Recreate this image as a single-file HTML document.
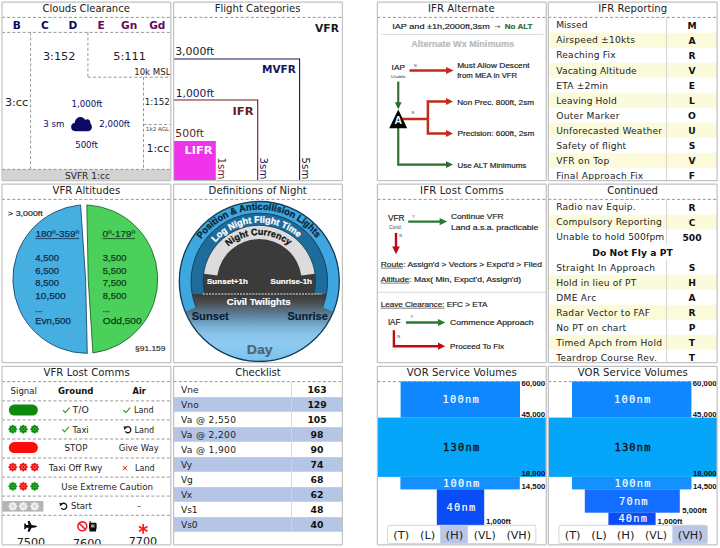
<!DOCTYPE html>
<html lang="en"><head><meta charset="utf-8"><title>Aviation Reference Tiles</title>
<style>
html,body{margin:0;padding:0;background:#fff;}
body{width:720px;height:548px;overflow:hidden;font-family:"DejaVu Sans", "Liberation Sans", sans-serif;}
svg{display:block;}
text{font-family:"DejaVu Sans", "Liberation Sans", sans-serif;}
.title{font-size:10.1px;fill:#222;}
.dash{stroke:#7c7c7c;stroke-width:0.8;stroke-dasharray:3 2.15;fill:none;}
.lb{font-family:"Liberation Sans", "DejaVu Sans", sans-serif;}
.mono{font-family:"DejaVu Sans Mono", "Liberation Mono", monospace;}
.b{font-weight:bold;}
.m{text-anchor:middle;}
.e{text-anchor:end;}
</style></head><body>
<svg width="720" height="548" viewBox="0 0 720 548">
<g fill="#222">
<g>
<rect x="2.0" y="2.1" width="168.8" height="178.5" rx="0.7" fill="#fff" stroke="none"/>
<clipPath id="c1"><rect x="2" y="2.1" width="168.8" height="178.5"/></clipPath>
<g clip-path="url(#c1)">
<text x="16.67" y="28.8" font-size="10.6" class="b m" fill="#0b0b63" >B</text>
<text x="44.800000000000004" y="28.8" font-size="10.6" class="b m" fill="#0b0b63" >C</text>
<text x="72.92999999999999" y="28.8" font-size="10.6" class="b m" fill="#0b0b63" >D</text>
<text x="101.06" y="28.8" font-size="10.6" class="b m" fill="#650a63" >E</text>
<text x="129.19" y="28.8" font-size="10.6" class="b m" fill="#650a63" >Gn</text>
<text x="157.32" y="28.8" font-size="10.6" class="b m" fill="#650a63" >Gd</text>
<line x1="2" y1="32.4" x2="170.8" y2="32.4" class="dash" />
<line x1="30.6" y1="32.4" x2="30.6" y2="169.4" class="dash" />
<line x1="87.9" y1="32.4" x2="87.9" y2="77.2" class="dash" />
<line x1="87.9" y1="77.2" x2="170.8" y2="77.2" class="dash" />
<line x1="143.5" y1="77.2" x2="143.5" y2="169.4" class="dash" />
<line x1="143.5" y1="124.5" x2="170.8" y2="124.5" class="dash" />
<text x="59.2" y="59.7" font-size="11.3" class="m" >3:152</text>
<text x="129.6" y="59.7" font-size="11.3" class="m" >5:111</text>
<text x="134.2" y="74.7" font-size="8.6" class="" >10k MSL</text>
<text x="16.6" y="105.6" font-size="11.3" class="m" >3:cc</text>
<text x="87" y="106.5" font-size="8.6" class="m" fill="#0b0b63" >1,000ft</text>
<text x="53.8" y="127.1" font-size="8.6" class="m" fill="#0b0b63" >3 sm</text>
<text x="114.7" y="127.1" font-size="8.6" class="m" fill="#0b0b63" >2,000ft</text>
<text x="86.5" y="147.5" font-size="8.6" class="m" fill="#0b0b63" >500ft</text>
<text x="157.3" y="104.5" font-size="8.7" class="m" >1:152</text>
<text x="157.5" y="131.2" font-size="5.6" class="m" fill="#444" >1k2 AGL</text>
<text x="157.8" y="151.7" font-size="11" class="m" >1:cc</text>
<path d="M75.5 131.2 C72.5 131.2 71 129.3 71 127 C71 124.6 72.8 123 75 122.8 C75.2 119.3 77.8 116.9 81 116.9 C83.3 116.9 85.2 118 86.2 119.8 C86.9 119.4 87.6 119.2 88.4 119.2 C90.8 119.2 92.3 121.2 92 123.6 C93 124.4 93.6 125.8 93.6 127 C93.6 129.4 91.8 131.2 89.2 131.2 Z" fill="#0b0b63" transform="translate(81.5,0) scale(0.92,1) translate(-82.3,0)"/>
<rect x="2" y="169.4" width="168.8" height="11.3" fill="#d3d3d3" />
<line x1="2" y1="169.4" x2="170.8" y2="169.4" class="dash" />
<text x="87.5" y="178.9" font-size="9" class="m" >SVFR 1:cc</text>
</g>
<line x1="2.0" y1="17.40" x2="170.8" y2="17.40" class="dash"/>
<text x="42.6" y="11.80" class="title" textLength="87.3" lengthAdjust="spacing">Clouds Clearance</text>
<rect x="2.0" y="2.1" width="168.8" height="178.5" rx="0.7" fill="none" stroke="#c2c2c2" stroke-width="1.25"/>
</g>
<g>
<rect x="173.6" y="2.1" width="168.8" height="178.5" rx="0.7" fill="#fff" stroke="none"/>
<clipPath id="c2"><rect x="173.6" y="2.1" width="168.8" height="178.5"/></clipPath>
<g clip-path="url(#c2)">
<text x="338.9" y="31.5" font-size="10.6" class="b e" fill="#1a1a1a" textLength="23.8" lengthAdjust="spacingAndGlyphs">VFR</text>
<text x="175.2" y="55.2" font-size="10.9" class="" fill="#222" >3,000ft</text>
<path d="M173.6 59 H299.6 V181" fill="none" stroke="#16165e" stroke-width="1.1"/>
<text x="295.8" y="73.4" font-size="10.5" class="b e" fill="#16165e" textLength="33.8" lengthAdjust="spacingAndGlyphs">MVFR</text>
<text x="175.8" y="96.5" font-size="10.7" class="" fill="#16165e" >1,000ft</text>
<path d="M173.6 100 H257.7 V181" fill="none" stroke="#6a1c1c" stroke-width="1.1"/>
<text x="253.6" y="114.7" font-size="10.5" class="b e" fill="#6a1c1c" textLength="21" lengthAdjust="spacingAndGlyphs">IFR</text>
<text x="175.3" y="136.9" font-size="10.9" class="" fill="#6a1c1c" >500ft</text>
<rect x="173.6" y="141" width="42.2" height="40" fill="#ee33ea" />
<text x="212.6" y="154.4" font-size="10.5" class="b e" fill="#fff" textLength="28.1" lengthAdjust="spacingAndGlyphs">LIFR</text>
<text x="0" y="0" font-size="10.2" class="" fill="#6a1c1c" transform="translate(217.6,157.6) rotate(90)">1sm</text>
<text x="0" y="0" font-size="10.2" class="" fill="#16165e" transform="translate(259.9,157.6) rotate(90)">3sm</text>
<text x="0" y="0" font-size="10.2" class="" fill="#222" transform="translate(302,157.6) rotate(90)">5sm</text>
</g>
<line x1="173.6" y1="17.40" x2="342.4" y2="17.40" class="dash"/>
<text x="214.7" y="11.80" class="title" textLength="85.8" lengthAdjust="spacing">Flight Categories</text>
<rect x="173.6" y="2.1" width="168.8" height="178.5" rx="0.7" fill="none" stroke="#c2c2c2" stroke-width="1.25"/>
</g>
<g>
<rect x="377.4" y="2.1" width="168.8" height="178.5" rx="0.7" fill="#fff" stroke="none"/>
<text x="392.2" y="29" font-size="7.9" class="lb" fill="#222" textLength="97.6" lengthAdjust="spacingAndGlyphs"  stroke="#222" stroke-width="0.18">IAP and ±1h,2000ft,3sm</text>
<text x="494.2" y="29.3" font-size="7.2" class="" fill="#555" >→</text>
<text x="504.7" y="29" font-size="7.9" class="lb b" fill="#2e6b2c" textLength="27.8" lengthAdjust="spacingAndGlyphs"  stroke="#2e6b2c" stroke-width="0.18">No ALT</text>
<line x1="381" y1="34.4" x2="543.5" y2="34.4" class="" stroke="#d2d2d2" stroke-width="0.8"/>
<text x="411.3" y="46.5" font-size="8.2" class="lb b" fill="#b9b9b9" textLength="102.8" lengthAdjust="spacingAndGlyphs"  stroke="#b9b9b9" stroke-width="0.18">Alternate Wx Minimums</text>
<text x="391.6" y="69.9" font-size="8" class="lb" fill="#222" textLength="13.4" lengthAdjust="spacingAndGlyphs"  stroke="#222" stroke-width="0.18">IAP</text>
<text x="391" y="77.5" font-size="4" class="lb" fill="#333" textLength="14.6" lengthAdjust="spacingAndGlyphs" >Usable</text>
<text x="414" y="66.6" font-size="3.6" class="lb" fill="#333" >N</text>
<text x="411.6" y="114.2" font-size="3.6" class="lb" fill="#333" >N</text>
<path d="M409.5 70.5 H447" stroke="#c22a1c" stroke-width="2.5" fill="none"/>
<path d="M446 66.9 L453.6 70.5 L446 74.1 Z" fill="#c22a1c"/>
<text x="457.2" y="67.5" font-size="7.4" class="lb" fill="#222" textLength="72.5" lengthAdjust="spacingAndGlyphs"  stroke="#222" stroke-width="0.18">Must Allow Descent</text>
<text x="457.2" y="77.5" font-size="7.4" class="lb" fill="#222" textLength="60" lengthAdjust="spacingAndGlyphs"  stroke="#222" stroke-width="0.18">from MEA in VFR</text>
<path d="M398.25 81.6 V103" stroke="#2e6b2c" stroke-width="2.1" fill="none"/>
<path d="M394.8 102.2 L401.7 102.2 L398.25 109.2 Z" fill="#2e6b2c"/>
<path d="M398.25 127 V164.6 H447" stroke="#2e6b2c" stroke-width="2.1" fill="none"/>
<path d="M446 161.2 L453 164.6 L446 168 Z" fill="#2e6b2c"/>
<path d="M402 118.9 H427.9 M446.5 101.6 H427.9 V133.5 H446.5" stroke="#c22a1c" stroke-width="2.5" fill="none"/>
<path d="M446 98.1 L453 101.6 L446 105.1 Z" fill="#c22a1c"/>
<path d="M446 130 L453 133.5 L446 137 Z" fill="#c22a1c"/>
<path d="M398.25 109.6 L407.2 128.3 L389.2 128.3 Z" fill="#000"/>
<text x="398.3" y="123.7" font-size="10.4" class="lb b m" fill="#fff" >A</text>
<text x="457.2" y="104.5" font-size="7.5" class="lb" fill="#222" textLength="76.9" lengthAdjust="spacingAndGlyphs"  stroke="#222" stroke-width="0.18">Non Prec. 800ft, 2sm</text>
<text x="457.4" y="135.6" font-size="7.5" class="lb" fill="#222" textLength="76.9" lengthAdjust="spacingAndGlyphs"  stroke="#222" stroke-width="0.18">Precision: 600ft, 2sm</text>
<text x="457.4" y="167.7" font-size="7.5" class="lb" fill="#222" textLength="69" lengthAdjust="spacingAndGlyphs"  stroke="#222" stroke-width="0.18">Use ALT Minimums</text>
<line x1="377.4" y1="17.40" x2="546.2" y2="17.40" class="dash"/>
<text x="428" y="11.80" class="title" textLength="66.6" lengthAdjust="spacing">IFR Alternate</text>
<rect x="377.4" y="2.1" width="168.8" height="178.5" rx="0.7" fill="none" stroke="#c2c2c2" stroke-width="1.25"/>
</g>
<g>
<rect x="548.3" y="2.1" width="168.8" height="178.5" rx="0.7" fill="#fff" stroke="none"/>
<clipPath id="c4"><rect x="548.3" y="2.1" width="168.8" height="178.5"/></clipPath>
<g clip-path="url(#c4)">
<text x="556.1999999999999" y="28.45" font-size="9.1" class="" fill="#222" textLength="31.25" lengthAdjust="spacing">Missed</text>
<text x="692.0" y="28.90" font-size="9.2" class="b m" fill="#111" >M</text>
<rect x="548.3" y="32.62" width="168.8" height="15.02" fill="#fbfbdc" />
<text x="556.1999999999999" y="43.47" font-size="9.1" class="" fill="#222" textLength="78.75" lengthAdjust="spacing">Airspeed ±10kts</text>
<text x="692.0" y="43.92" font-size="9.2" class="b m" fill="#111" >A</text>
<text x="556.1999999999999" y="58.49" font-size="9.1" class="" fill="#222" textLength="59.50" lengthAdjust="spacing">Reaching Fix</text>
<text x="692.0" y="58.94" font-size="9.2" class="b m" fill="#111" >R</text>
<rect x="548.3" y="62.66" width="168.8" height="15.02" fill="#fbfbdc" />
<text x="556.1999999999999" y="73.51" font-size="9.1" class="" fill="#222" textLength="80.50" lengthAdjust="spacing">Vacating Altitude</text>
<text x="692.0" y="73.96" font-size="9.2" class="b m" fill="#111" >V</text>
<text x="556.1999999999999" y="88.53" font-size="9.1" class="" fill="#222" textLength="51.75" lengthAdjust="spacing">ETA ±2min</text>
<text x="692.0" y="88.98" font-size="9.2" class="b m" fill="#111" >E</text>
<rect x="548.3" y="92.70" width="168.8" height="15.02" fill="#fbfbdc" />
<text x="556.1999999999999" y="103.55" font-size="9.1" class="" fill="#222" textLength="60.50" lengthAdjust="spacing">Leaving Hold</text>
<text x="692.0" y="104.00" font-size="9.2" class="b m" fill="#111" >L</text>
<text x="556.1999999999999" y="118.57" font-size="9.1" class="" fill="#222" textLength="63.25" lengthAdjust="spacing">Outer Marker</text>
<text x="692.0" y="119.02" font-size="9.2" class="b m" fill="#111" >O</text>
<rect x="548.3" y="122.74" width="168.8" height="15.02" fill="#fbfbdc" />
<text x="556.1999999999999" y="133.59" font-size="9.1" class="" fill="#222" textLength="105.75" lengthAdjust="spacing">Unforecasted Weather</text>
<text x="692.0" y="134.04" font-size="9.2" class="b m" fill="#111" >U</text>
<text x="556.1999999999999" y="148.61" font-size="9.1" class="" fill="#222" textLength="70.00" lengthAdjust="spacing">Safety of flight</text>
<text x="692.0" y="149.06" font-size="9.2" class="b m" fill="#111" >S</text>
<rect x="548.3" y="152.78" width="168.8" height="15.02" fill="#fbfbdc" />
<text x="556.1999999999999" y="163.63" font-size="9.1" class="" fill="#222" textLength="53.00" lengthAdjust="spacing">VFR on Top</text>
<text x="692.0" y="164.08" font-size="9.2" class="b m" fill="#111" >V</text>
<text x="556.1999999999999" y="178.65" font-size="9.1" class="" fill="#222" textLength="87.00" lengthAdjust="spacing">Final Approach Fix</text>
<text x="692.0" y="179.10" font-size="9.2" class="b m" fill="#111" >F</text>
<line x1="666.5999999999999" y1="17.60" x2="666.5999999999999" y2="182.82" class="" stroke="#cfcfcf" stroke-width="0.9"/>
</g>
<line x1="548.3" y1="17.40" x2="717.0999999999999" y2="17.40" class="dash"/>
<text x="598.2" y="11.80" class="title" textLength="69" lengthAdjust="spacing">IFR Reporting</text>
<rect x="548.3" y="2.1" width="168.8" height="178.5" rx="0.7" fill="none" stroke="#c2c2c2" stroke-width="1.25"/>
</g>
<g>
<rect x="2.0" y="184.1" width="168.8" height="178.5" rx="0.7" fill="#fff" stroke="none"/>
<path d="M85.6 279 L80.6 204.9 A74.4 74.4 0 0 0 87.3 353.4 Z" fill="#46afe2" stroke="#113a5a" stroke-width="0.8" stroke-linejoin="round"/>
<path d="M88.2 279 L86.8 204.9 A74.4 74.4 0 0 1 92.9 353 Z" fill="#4bd15b" stroke="#0e5a20" stroke-width="0.8" stroke-linejoin="round"/>
<text x="8.1" y="215.7" font-size="8" class="lb" fill="#222" textLength="34.6" lengthAdjust="spacingAndGlyphs"  stroke="#222" stroke-width="0.18">&gt; 3,000ft</text>
<text x="35.4" y="237" font-size="9.2" class="lb" fill="#0d2c4a" textLength="43.7" lengthAdjust="spacingAndGlyphs" stroke="#0d2c4a" stroke-width="0.2">180º-359º</text>
<line x1="35.4" y1="238.6" x2="79.1" y2="238.6" class="" stroke="#0d2c4a" stroke-width="0.8"/>
<text x="102.5" y="237" font-size="9.2" class="lb" fill="#0b3f17" textLength="32.5" lengthAdjust="spacingAndGlyphs" stroke="#0b3f17" stroke-width="0.2">0º-179º</text>
<line x1="102.5" y1="238.6" x2="135" y2="238.6" class="" stroke="#0b3f17" stroke-width="0.8"/>
<text x="35.3" y="261" font-size="9.2" class="lb" fill="#0d2c4a" textLength="23.6" lengthAdjust="spacingAndGlyphs" stroke="#0d2c4a" stroke-width="0.25">4,500</text>
<text x="35.3" y="273.7" font-size="9.2" class="lb" fill="#0d2c4a" textLength="23.6" lengthAdjust="spacingAndGlyphs" stroke="#0d2c4a" stroke-width="0.25">6,500</text>
<text x="35.3" y="286.3" font-size="9.2" class="lb" fill="#0d2c4a" textLength="23.6" lengthAdjust="spacingAndGlyphs" stroke="#0d2c4a" stroke-width="0.25">8,500</text>
<text x="35.3" y="299" font-size="9.2" class="lb" fill="#0d2c4a" textLength="30.5" lengthAdjust="spacingAndGlyphs" stroke="#0d2c4a" stroke-width="0.25">10,500</text>
<text x="35.3" y="311.6" font-size="9.2" class="lb" fill="#0d2c4a" textLength="7" lengthAdjust="spacingAndGlyphs" stroke="#0d2c4a" stroke-width="0.25">...</text>
<text x="35.3" y="324.2" font-size="9.2" class="lb" fill="#0d2c4a" textLength="35.5" lengthAdjust="spacingAndGlyphs" stroke="#0d2c4a" stroke-width="0.25">Evn,500</text>
<text x="102.8" y="261" font-size="9.2" class="lb" fill="#0b3f17" textLength="23.6" lengthAdjust="spacingAndGlyphs" stroke="#0b3f17" stroke-width="0.25">3,500</text>
<text x="102.8" y="273.7" font-size="9.2" class="lb" fill="#0b3f17" textLength="23.6" lengthAdjust="spacingAndGlyphs" stroke="#0b3f17" stroke-width="0.25">5,500</text>
<text x="102.8" y="286.3" font-size="9.2" class="lb" fill="#0b3f17" textLength="23.6" lengthAdjust="spacingAndGlyphs" stroke="#0b3f17" stroke-width="0.25">7,500</text>
<text x="102.8" y="299" font-size="9.2" class="lb" fill="#0b3f17" textLength="23.6" lengthAdjust="spacingAndGlyphs" stroke="#0b3f17" stroke-width="0.25">8,500</text>
<text x="102.8" y="311.6" font-size="9.2" class="lb" fill="#0b3f17" textLength="7" lengthAdjust="spacingAndGlyphs" stroke="#0b3f17" stroke-width="0.25">...</text>
<text x="102.8" y="324.2" font-size="9.2" class="lb" fill="#0b3f17" textLength="38.75" lengthAdjust="spacingAndGlyphs" stroke="#0b3f17" stroke-width="0.25">Odd,500</text>
<text x="135" y="350.7" font-size="7.6" class="lb" fill="#333" textLength="30.5" lengthAdjust="spacingAndGlyphs"  stroke="#333" stroke-width="0.18">§91.159</text>
<line x1="2.0" y1="199.40" x2="170.8" y2="199.40" class="dash"/>
<text x="52.6" y="193.80" class="title" textLength="67.7" lengthAdjust="spacing">VFR Altitudes</text>
<rect x="2.0" y="184.1" width="168.8" height="178.5" rx="0.7" fill="none" stroke="#c2c2c2" stroke-width="1.25"/>
</g>
<g>
<rect x="173.6" y="184.1" width="168.8" height="178.5" rx="0.7" fill="#fff" stroke="none"/>
<defs>
<linearGradient id="dayg" gradientUnits="userSpaceOnUse" x1="0" y1="294" x2="0" y2="363">
<stop offset="0.03" stop-color="#3c3c3c"/><stop offset="0.123" stop-color="#4a4d50"/><stop offset="0.226" stop-color="#566a7c"/>
<stop offset="0.33" stop-color="#5f88a5"/><stop offset="0.45" stop-color="#75aacd"/><stop offset="0.565" stop-color="#88c2e8"/>
<stop offset="0.706" stop-color="#8fcbf1"/><stop offset="1" stop-color="#78c1ec"/>
</linearGradient>
<clipPath id="c6"><rect x="173.6" y="184.1" width="168.8" height="178.5"/></clipPath>
<clipPath id="c6b"><rect x="170" y="190" width="180" height="104"/></clipPath>
</defs>
<g clip-path="url(#c6)">
<circle cx="259.3" cy="281.5" r="80" fill="url(#dayg)"/>
<g clip-path="url(#c6b)">
<circle cx="259.3" cy="281.5" r="68.6" fill="#1e6c9c"/>
<circle cx="259.3" cy="281.5" r="56.2" fill="#3b3b3b" stroke="#17384e" stroke-width="0.7"/>
</g>
<path d="M204.04 273.73 A55.8 55.8 0 0 1 314.56 273.73 L301.29 275.60 A42.4 42.4 0 0 0 217.31 275.60 Z" fill="#dcdcdc" />
<path d="M185.23 311.73 A80 80 0 1 1 333.37 311.73 L322.54 307.31 A68.3 68.3 0 1 0 196.06 307.31 Z" fill="#3fa7e0" />
<path d="M196.06 307.31 A68.3 68.3 0 1 1 322.54 307.31" fill="none" stroke="#143a52" stroke-width="0.9"/>
<circle cx="259.3" cy="281.5" r="80" fill="none" stroke="#123b55" stroke-width="1.3"/>
<line x1="202.8" y1="294" x2="321.8" y2="294" class="" stroke="#ececec" stroke-width="1.1" stroke-dasharray="2 1.1"/>
<path id="a1" d="M201.21 239.30 A71.8 71.8 0 0 1 316.34 237.89" fill="none"/>
<text font-size="9.4" class="lb b" fill="#0c2438" stroke="#0c2438" stroke-width="0.3"><textPath href="#a1" textLength="133.6" lengthAdjust="spacingAndGlyphs">Position &amp; Anticollision Lights</textPath></text>
<path id="a2" d="M215.26 242.54 A58.8 58.8 0 0 1 298.26 237.46" fill="none"/>
<text font-size="9.1" class="lb b" fill="#fff" stroke="#fff" stroke-width="0.3"><textPath href="#a2" textLength="92.4" lengthAdjust="spacingAndGlyphs">Log Night Flight Time</textPath></text>
<path id="a3" d="M228.42 246.60 A46.6 46.6 0 0 1 288.63 245.28" fill="none"/>
<text font-size="9.1" class="lb b" fill="#111" stroke="#111" stroke-width="0.3"><textPath href="#a3" textLength="65.5" lengthAdjust="spacingAndGlyphs">Night Currency</textPath></text>
<text x="207" y="283.5" font-size="7.2" class="lb b" fill="#fff" textLength="40.9" lengthAdjust="spacingAndGlyphs"  stroke="#fff" stroke-width="0.18">Sunset+1h</text>
<text x="270.6" y="283.5" font-size="7.2" class="lb b" fill="#fff" textLength="41.4" lengthAdjust="spacingAndGlyphs"  stroke="#fff" stroke-width="0.18">Sunrise-1h</text>
<text x="226.8" y="304.9" font-size="8.5" class="lb b" fill="#fff" textLength="63.7" lengthAdjust="spacingAndGlyphs"  stroke="#fff" stroke-width="0.18">Civil Twilights</text>
<text x="191.7" y="320.4" font-size="10.4" class="lb b" fill="#0b1d30" textLength="37.1" lengthAdjust="spacingAndGlyphs"  stroke="#0b1d30" stroke-width="0.18">Sunset</text>
<text x="287.5" y="320.3" font-size="10.4" class="lb b" fill="#0b1d30" textLength="40.3" lengthAdjust="spacingAndGlyphs"  stroke="#0b1d30" stroke-width="0.18">Sunrise</text>
<text x="246.8" y="353.6" font-size="13.6" class="lb b" fill="#4c6476" textLength="25.8" lengthAdjust="spacingAndGlyphs"  stroke="#4c6476" stroke-width="0.18">Day</text>
</g>
<line x1="173.6" y1="199.40" x2="342.4" y2="199.40" class="dash"/>
<text x="208.6" y="193.80" class="title" textLength="98.2" lengthAdjust="spacing">Definitions of Night</text>
<rect x="173.6" y="184.1" width="168.8" height="178.5" rx="0.7" fill="none" stroke="#c2c2c2" stroke-width="1.25"/>
</g>
<g>
<rect x="377.4" y="184.1" width="168.8" height="178.5" rx="0.7" fill="#fff" stroke="none"/>
<text x="387.9" y="221.4" font-size="9" class="lb" fill="#222" textLength="16.6" lengthAdjust="spacingAndGlyphs"  stroke="#222" stroke-width="0.18">VFR</text>
<text x="389.1" y="229.1" font-size="4.8" class="lb" fill="#444" textLength="12.9" lengthAdjust="spacingAndGlyphs" >Cond.</text>
<text x="412.2" y="217.6" font-size="3.8" class="lb" fill="#333" >Y</text>
<text x="399.2" y="237.1" font-size="4" class="lb" fill="#333" >N</text>
<path d="M408.2 221.6 H441" stroke="#2a7a32" stroke-width="2.4" fill="none"/>
<path d="M439.6 218 L447.2 221.6 L439.6 225.2 Z" fill="#2a7a32"/>
<path d="M396 232.9 V247.5" stroke="#c00a12" stroke-width="2.4" fill="none"/>
<path d="M392.2 246.4 L399.8 246.4 L396 254.3 Z" fill="#c00a12"/>
<text x="450.9" y="218.9" font-size="7.7" class="lb" fill="#222" textLength="52.7" lengthAdjust="spacingAndGlyphs"  stroke="#222" stroke-width="0.18">Continue VFR</text>
<text x="450.9" y="230" font-size="7.7" class="lb" fill="#222" textLength="87.5" lengthAdjust="spacingAndGlyphs"  stroke="#222" stroke-width="0.18">Land a.s.a. practicable</text>
<text x="380.7" y="266.7" font-size="7.6" class="lb" fill="#222" textLength="161.3" lengthAdjust="spacingAndGlyphs"  stroke="#222" stroke-width="0.18">Route: Assign'd &gt; Vectors &gt; Expct'd &gt; Filed</text>
<line x1="380.7" y1="268.1" x2="402.9" y2="268.1" class="" stroke="#222" stroke-width="0.6"/>
<text x="380.7" y="281.7" font-size="7.6" class="lb" fill="#222" textLength="140.5" lengthAdjust="spacingAndGlyphs"  stroke="#222" stroke-width="0.18">Altitude: Max( Min, Expct'd, Assign'd)</text>
<line x1="380.7" y1="283.1" x2="409.7" y2="283.1" class="" stroke="#222" stroke-width="0.6"/>
<line x1="377.4" y1="292.3" x2="546.2" y2="292.3" class="" stroke="#d2d2d2" stroke-width="0.9"/>
<text x="380.7" y="306.7" font-size="7.6" class="lb" fill="#222" textLength="106.8" lengthAdjust="spacingAndGlyphs"  stroke="#222" stroke-width="0.18">Leave Clearance: EFC &gt; ETA</text>
<line x1="380.7" y1="308.2" x2="444.5" y2="308.2" class="" stroke="#222" stroke-width="0.6"/>
<text x="387.9" y="325.2" font-size="8.7" class="lb" fill="#222" textLength="12.5" lengthAdjust="spacingAndGlyphs"  stroke="#222" stroke-width="0.18">IAF</text>
<text x="410.4" y="318" font-size="3.8" class="lb" fill="#333" >Y</text>
<text x="397.3" y="337.5" font-size="4" class="lb" fill="#333" >N</text>
<path d="M406 322.5 H439" stroke="#2a7a32" stroke-width="2.4" fill="none"/>
<path d="M438 318.9 L445.3 322.5 L438 326.1 Z" fill="#2a7a32"/>
<path d="M393.9 330.2 V346.2 H439" stroke="#c00a12" stroke-width="2.4" fill="none"/>
<path d="M438 342.6 L445.2 346.2 L438 349.8 Z" fill="#c00a12"/>
<text x="450" y="325.2" font-size="7.7" class="lb" fill="#222" textLength="83.7" lengthAdjust="spacingAndGlyphs"  stroke="#222" stroke-width="0.18">Commence Approach</text>
<text x="450" y="348.7" font-size="7.7" class="lb" fill="#222" textLength="54.2" lengthAdjust="spacingAndGlyphs"  stroke="#222" stroke-width="0.18">Proceed To Fix</text>
<line x1="377.4" y1="199.40" x2="546.2" y2="199.40" class="dash"/>
<text x="420" y="193.80" class="title" textLength="83.6" lengthAdjust="spacing">IFR Lost Comms</text>
<rect x="377.4" y="184.1" width="168.8" height="178.5" rx="0.7" fill="none" stroke="#c2c2c2" stroke-width="1.25"/>
</g>
<g>
<rect x="548.3" y="184.1" width="168.8" height="178.5" rx="0.7" fill="#fff" stroke="none"/>
<clipPath id="c8"><rect x="548.3" y="184.1" width="168.8" height="178.5"/></clipPath>
<g clip-path="url(#c8)">
<text x="556.1999999999999" y="210.45" font-size="9.1" class="" fill="#222" textLength="79.50" lengthAdjust="spacing">Radio nav Equip.</text>
<text x="692.0" y="210.90" font-size="9.2" class="b m" fill="#111" >R</text>
<rect x="548.3" y="214.62" width="168.8" height="15.02" fill="#fbfbdc" />
<text x="556.1999999999999" y="225.47" font-size="9.1" class="" fill="#222" textLength="105.50" lengthAdjust="spacing">Compulsory Reporting</text>
<text x="692.0" y="225.92" font-size="9.2" class="b m" fill="#111" >C</text>
<text x="556.1999999999999" y="240.49" font-size="9.1" class="" fill="#222" textLength="108.00" lengthAdjust="spacing">Unable to hold 500fpm</text>
<text x="692.0" y="240.94" font-size="9.2" class="b m" fill="#111" >500</text>
<text x="632.4999999999999" y="255.51" font-size="9.2" class="b m" fill="#111" textLength="80.5" lengthAdjust="spacing">Do Not Fly a PT</text>
<text x="556.1999999999999" y="270.53" font-size="9.1" class="" fill="#222" textLength="98.75" lengthAdjust="spacing">Straight In Approach</text>
<text x="692.0" y="270.98" font-size="9.2" class="b m" fill="#111" >S</text>
<rect x="548.3" y="274.70" width="168.8" height="15.02" fill="#fbfbdc" />
<text x="556.1999999999999" y="285.55" font-size="9.1" class="" fill="#222" textLength="80.00" lengthAdjust="spacing">Hold in lieu of PT</text>
<text x="692.0" y="286.00" font-size="9.2" class="b m" fill="#111" >H</text>
<text x="556.1999999999999" y="300.57" font-size="9.1" class="" fill="#222" textLength="40.00" lengthAdjust="spacing">DME Arc</text>
<text x="692.0" y="301.02" font-size="9.2" class="b m" fill="#111" >A</text>
<rect x="548.3" y="304.74" width="168.8" height="15.02" fill="#fbfbdc" />
<text x="556.1999999999999" y="315.59" font-size="9.1" class="" fill="#222" textLength="93.75" lengthAdjust="spacing">Radar Vector to FAF</text>
<text x="692.0" y="316.04" font-size="9.2" class="b m" fill="#111" >R</text>
<text x="556.1999999999999" y="330.61" font-size="9.1" class="" fill="#222" textLength="70.00" lengthAdjust="spacing">No PT on chart</text>
<text x="692.0" y="331.06" font-size="9.2" class="b m" fill="#111" >P</text>
<rect x="548.3" y="334.78" width="168.8" height="15.02" fill="#fbfbdc" />
<text x="556.1999999999999" y="345.63" font-size="9.1" class="" fill="#222" textLength="105.75" lengthAdjust="spacing">Timed Apch from Hold</text>
<text x="692.0" y="346.08" font-size="9.2" class="b m" fill="#111" >T</text>
<text x="556.1999999999999" y="360.65" font-size="9.1" class="" fill="#222" textLength="100.75" lengthAdjust="spacing">Teardrop Course Rev.</text>
<text x="692.0" y="361.10" font-size="9.2" class="b m" fill="#111" >T</text>
<line x1="666.5999999999999" y1="199.60" x2="666.5999999999999" y2="244.66" class="" stroke="#cfcfcf" stroke-width="0.9"/>
<line x1="666.5999999999999" y1="259.68" x2="666.5999999999999" y2="364.82" class="" stroke="#cfcfcf" stroke-width="0.9"/>
</g>
<line x1="548.3" y1="199.40" x2="717.0999999999999" y2="199.40" class="dash"/>
<text x="607.3" y="193.80" class="title" textLength="50.6" lengthAdjust="spacing">Continued</text>
<rect x="548.3" y="184.1" width="168.8" height="178.5" rx="0.7" fill="none" stroke="#c2c2c2" stroke-width="1.25"/>
</g>
<g>
<rect x="2.0" y="366.3" width="168.8" height="178.5" rx="0.7" fill="#fff" stroke="none"/>
<clipPath id="c9"><rect x="2" y="366.3" width="168.8" height="178.5"/></clipPath>
<g clip-path="url(#c9)">
<line x1="2" y1="400.9" x2="170.8" y2="400.9" class="dash" />
<line x1="2" y1="419.9" x2="170.8" y2="419.9" class="dash" />
<line x1="2" y1="439.0" x2="170.8" y2="439.0" class="dash" />
<line x1="2" y1="458.0" x2="170.8" y2="458.0" class="dash" />
<line x1="2" y1="477.1" x2="170.8" y2="477.1" class="dash" />
<line x1="2" y1="496.1" x2="170.8" y2="496.1" class="dash" />
<line x1="2" y1="515.3" x2="170.8" y2="515.3" class="dash" />
<text x="10.6" y="393.6" font-size="9.2" class="" fill="#222" textLength="26.3" lengthAdjust="spacingAndGlyphs">Signal</text>
<text x="58.1" y="393.6" font-size="9.2" class="b" fill="#111" textLength="35.3" lengthAdjust="spacingAndGlyphs">Ground</text>
<text x="132.5" y="393.6" font-size="9.2" class="b" fill="#111" textLength="13.4" lengthAdjust="spacingAndGlyphs">Air</text>
<rect x="8.8" y="404.6" width="29.1" height="11" rx="5.5" fill="#0b8a0b"/>
<path d="M63.3 410.5 L65.3 412.6 L69.3 407.9" fill="none" stroke="#2a9a2a" stroke-width="1.1" stroke-linecap="round" stroke-linejoin="round"/>
<text x="72.6" y="413.4" font-size="9.2" class="" fill="#222" textLength="16.1" lengthAdjust="spacingAndGlyphs">T/O</text>
<path d="M123.89999999999999 410.5 L125.89999999999999 412.6 L129.9 407.9" fill="none" stroke="#2a9a2a" stroke-width="1.1" stroke-linecap="round" stroke-linejoin="round"/>
<text x="134" y="413.4" font-size="9.2" class="" fill="#222" textLength="19.7" lengthAdjust="spacingAndGlyphs">Land</text>
<path d="M16.91 428.66 L16.91 429.74 L15.99 430.05 L15.66 430.85 L16.09 431.73 L15.33 432.49 L14.46 432.05 L13.65 432.39 L13.34 433.31 L12.26 433.31 L11.95 432.39 L11.15 432.06 L10.27 432.49 L9.51 431.73 L9.95 430.86 L9.61 430.05 L8.69 429.74 L8.69 428.66 L9.61 428.35 L9.94 427.55 L9.51 426.67 L10.27 425.91 L11.14 426.35 L11.95 426.01 L12.26 425.09 L13.34 425.09 L13.65 426.01 L14.45 426.34 L15.33 425.91 L16.09 426.67 L15.65 427.54 L15.99 428.35 Z" fill="#0c8c0c" stroke="#0c8c0c" stroke-width="0.5" stroke-linejoin="round"/>
<circle cx="12.8" cy="429.2" r="1.45" fill="#0a7a0a" stroke="#4fcf4f" stroke-width="0.7"/>
<path d="M27.41 428.66 L27.41 429.74 L26.49 430.05 L26.16 430.85 L26.59 431.73 L25.83 432.49 L24.96 432.05 L24.15 432.39 L23.84 433.31 L22.76 433.31 L22.45 432.39 L21.65 432.06 L20.77 432.49 L20.01 431.73 L20.45 430.86 L20.11 430.05 L19.19 429.74 L19.19 428.66 L20.11 428.35 L20.44 427.55 L20.01 426.67 L20.77 425.91 L21.64 426.35 L22.45 426.01 L22.76 425.09 L23.84 425.09 L24.15 426.01 L24.95 426.34 L25.83 425.91 L26.59 426.67 L26.15 427.54 L26.49 428.35 Z" fill="#0c8c0c" stroke="#0c8c0c" stroke-width="0.5" stroke-linejoin="round"/>
<circle cx="23.3" cy="429.2" r="1.45" fill="#0a7a0a" stroke="#4fcf4f" stroke-width="0.7"/>
<path d="M38.81 428.66 L38.81 429.74 L37.89 430.05 L37.56 430.85 L37.99 431.73 L37.23 432.49 L36.36 432.05 L35.55 432.39 L35.24 433.31 L34.16 433.31 L33.85 432.39 L33.05 432.06 L32.17 432.49 L31.41 431.73 L31.85 430.86 L31.51 430.05 L30.59 429.74 L30.59 428.66 L31.51 428.35 L31.84 427.55 L31.41 426.67 L32.17 425.91 L33.04 426.35 L33.85 426.01 L34.16 425.09 L35.24 425.09 L35.55 426.01 L36.35 426.34 L37.23 425.91 L37.99 426.67 L37.55 427.54 L37.89 428.35 Z" fill="#0c8c0c" stroke="#0c8c0c" stroke-width="0.5" stroke-linejoin="round"/>
<circle cx="34.7" cy="429.2" r="1.45" fill="#0a7a0a" stroke="#4fcf4f" stroke-width="0.7"/>
<path d="M62.599999999999994 429.7 L64.6 431.8 L68.6 427.09999999999997" fill="none" stroke="#2a9a2a" stroke-width="1.1" stroke-linecap="round" stroke-linejoin="round"/>
<text x="72.5" y="432.6" font-size="9.2" class="" fill="#222" textLength="16.2" lengthAdjust="spacingAndGlyphs">Taxi</text>
<path d="M125.30 427.95 A3.05 3.05 0 1 1 125.30 431.45" fill="none" stroke="#1a1a1a" stroke-width="1.3"/>
<path d="M123.5 426.2 L127.30000000000001 426.9 L124.30000000000001 429.9 Z" fill="#1a1a1a"/>
<text x="134.5" y="432.6" font-size="9.2" class="" fill="#222" textLength="19.7" lengthAdjust="spacingAndGlyphs">Land</text>
<rect x="8.8" y="442.1" width="29.1" height="11" rx="5.5" fill="#ff0a0a"/>
<text x="64.5" y="451.1" font-size="9.2" class="" fill="#222" textLength="23" lengthAdjust="spacingAndGlyphs">STOP</text>
<text x="118.8" y="451.1" font-size="9.2" class="" fill="#222" textLength="40" lengthAdjust="spacingAndGlyphs">Give Way</text>
<path d="M16.91 466.56 L16.91 467.64 L15.99 467.95 L15.66 468.75 L16.09 469.63 L15.33 470.39 L14.46 469.95 L13.65 470.29 L13.34 471.21 L12.26 471.21 L11.95 470.29 L11.15 469.96 L10.27 470.39 L9.51 469.63 L9.95 468.76 L9.61 467.95 L8.69 467.64 L8.69 466.56 L9.61 466.25 L9.94 465.45 L9.51 464.57 L10.27 463.81 L11.14 464.25 L11.95 463.91 L12.26 462.99 L13.34 462.99 L13.65 463.91 L14.45 464.24 L15.33 463.81 L16.09 464.57 L15.65 465.44 L15.99 466.25 Z" fill="#ee1414" stroke="#ee1414" stroke-width="0.5" stroke-linejoin="round"/>
<circle cx="12.8" cy="467.1" r="1.45" fill="#d60a0a" stroke="#ff8a8a" stroke-width="0.7"/>
<path d="M27.41 466.56 L27.41 467.64 L26.49 467.95 L26.16 468.75 L26.59 469.63 L25.83 470.39 L24.96 469.95 L24.15 470.29 L23.84 471.21 L22.76 471.21 L22.45 470.29 L21.65 469.96 L20.77 470.39 L20.01 469.63 L20.45 468.76 L20.11 467.95 L19.19 467.64 L19.19 466.56 L20.11 466.25 L20.44 465.45 L20.01 464.57 L20.77 463.81 L21.64 464.25 L22.45 463.91 L22.76 462.99 L23.84 462.99 L24.15 463.91 L24.95 464.24 L25.83 463.81 L26.59 464.57 L26.15 465.44 L26.49 466.25 Z" fill="#ee1414" stroke="#ee1414" stroke-width="0.5" stroke-linejoin="round"/>
<circle cx="23.3" cy="467.1" r="1.45" fill="#d60a0a" stroke="#ff8a8a" stroke-width="0.7"/>
<path d="M38.81 466.56 L38.81 467.64 L37.89 467.95 L37.56 468.75 L37.99 469.63 L37.23 470.39 L36.36 469.95 L35.55 470.29 L35.24 471.21 L34.16 471.21 L33.85 470.29 L33.05 469.96 L32.17 470.39 L31.41 469.63 L31.85 468.76 L31.51 467.95 L30.59 467.64 L30.59 466.56 L31.51 466.25 L31.84 465.45 L31.41 464.57 L32.17 463.81 L33.04 464.25 L33.85 463.91 L34.16 462.99 L35.24 462.99 L35.55 463.91 L36.35 464.24 L37.23 463.81 L37.99 464.57 L37.55 465.44 L37.89 466.25 Z" fill="#ee1414" stroke="#ee1414" stroke-width="0.5" stroke-linejoin="round"/>
<circle cx="34.7" cy="467.1" r="1.45" fill="#d60a0a" stroke="#ff8a8a" stroke-width="0.7"/>
<text x="48.8" y="470.6" font-size="9.2" class="" fill="#222" textLength="53.7" lengthAdjust="spacingAndGlyphs">Taxi Off Rwy</text>
<path d="M122.8 466 L127 470.4 M127 466 L122.8 470.4" stroke="#d01818" stroke-width="0.95" fill="none"/>
<text x="135" y="470.6" font-size="9.2" class="" fill="#222" textLength="19.6" lengthAdjust="spacingAndGlyphs">Land</text>
<path d="M16.91 485.76 L16.91 486.84 L15.99 487.15 L15.66 487.95 L16.09 488.83 L15.33 489.59 L14.46 489.15 L13.65 489.49 L13.34 490.41 L12.26 490.41 L11.95 489.49 L11.15 489.16 L10.27 489.59 L9.51 488.83 L9.95 487.96 L9.61 487.15 L8.69 486.84 L8.69 485.76 L9.61 485.45 L9.94 484.65 L9.51 483.77 L10.27 483.01 L11.14 483.45 L11.95 483.11 L12.26 482.19 L13.34 482.19 L13.65 483.11 L14.45 483.44 L15.33 483.01 L16.09 483.77 L15.65 484.64 L15.99 485.45 Z" fill="#0c8c0c" stroke="#0c8c0c" stroke-width="0.5" stroke-linejoin="round"/>
<circle cx="12.8" cy="486.3" r="1.45" fill="#0a7a0a" stroke="#4fcf4f" stroke-width="0.7"/>
<path d="M27.41 485.76 L27.41 486.84 L26.49 487.15 L26.16 487.95 L26.59 488.83 L25.83 489.59 L24.96 489.15 L24.15 489.49 L23.84 490.41 L22.76 490.41 L22.45 489.49 L21.65 489.16 L20.77 489.59 L20.01 488.83 L20.45 487.96 L20.11 487.15 L19.19 486.84 L19.19 485.76 L20.11 485.45 L20.44 484.65 L20.01 483.77 L20.77 483.01 L21.64 483.45 L22.45 483.11 L22.76 482.19 L23.84 482.19 L24.15 483.11 L24.95 483.44 L25.83 483.01 L26.59 483.77 L26.15 484.64 L26.49 485.45 Z" fill="#ee1414" stroke="#ee1414" stroke-width="0.5" stroke-linejoin="round"/>
<circle cx="23.3" cy="486.3" r="1.45" fill="#d60a0a" stroke="#ff8a8a" stroke-width="0.7"/>
<path d="M38.81 485.76 L38.81 486.84 L37.89 487.15 L37.56 487.95 L37.99 488.83 L37.23 489.59 L36.36 489.15 L35.55 489.49 L35.24 490.41 L34.16 490.41 L33.85 489.49 L33.05 489.16 L32.17 489.59 L31.41 488.83 L31.85 487.96 L31.51 487.15 L30.59 486.84 L30.59 485.76 L31.51 485.45 L31.84 484.65 L31.41 483.77 L32.17 483.01 L33.04 483.45 L33.85 483.11 L34.16 482.19 L35.24 482.19 L35.55 483.11 L36.35 483.44 L37.23 483.01 L37.99 483.77 L37.55 484.64 L37.89 485.45 Z" fill="#0c8c0c" stroke="#0c8c0c" stroke-width="0.5" stroke-linejoin="round"/>
<circle cx="34.7" cy="486.3" r="1.45" fill="#0a7a0a" stroke="#4fcf4f" stroke-width="0.7"/>
<text x="61.3" y="489.6" font-size="9.2" class="" fill="#222" textLength="91.7" lengthAdjust="spacingAndGlyphs">Use Extreme Caution</text>
<rect x="2" y="501" width="41.4" height="10.6" fill="#b4b4b4" />
<path d="M16.91 505.76 L16.91 506.84 L15.99 507.15 L15.66 507.95 L16.09 508.83 L15.33 509.59 L14.46 509.15 L13.65 509.49 L13.34 510.41 L12.26 510.41 L11.95 509.49 L11.15 509.16 L10.27 509.59 L9.51 508.83 L9.95 507.96 L9.61 507.15 L8.69 506.84 L8.69 505.76 L9.61 505.45 L9.94 504.65 L9.51 503.77 L10.27 503.01 L11.14 503.45 L11.95 503.11 L12.26 502.19 L13.34 502.19 L13.65 503.11 L14.45 503.44 L15.33 503.01 L16.09 503.77 L15.65 504.64 L15.99 505.45 Z" fill="#f4f4f4" stroke="#f4f4f4" stroke-width="0.5" stroke-linejoin="round"/>
<circle cx="12.8" cy="506.3" r="1.45" fill="#e6e6e6" stroke="#c4c4c4" stroke-width="0.7"/>
<path d="M27.41 505.76 L27.41 506.84 L26.49 507.15 L26.16 507.95 L26.59 508.83 L25.83 509.59 L24.96 509.15 L24.15 509.49 L23.84 510.41 L22.76 510.41 L22.45 509.49 L21.65 509.16 L20.77 509.59 L20.01 508.83 L20.45 507.96 L20.11 507.15 L19.19 506.84 L19.19 505.76 L20.11 505.45 L20.44 504.65 L20.01 503.77 L20.77 503.01 L21.64 503.45 L22.45 503.11 L22.76 502.19 L23.84 502.19 L24.15 503.11 L24.95 503.44 L25.83 503.01 L26.59 503.77 L26.15 504.64 L26.49 505.45 Z" fill="#f4f4f4" stroke="#f4f4f4" stroke-width="0.5" stroke-linejoin="round"/>
<circle cx="23.3" cy="506.3" r="1.45" fill="#e6e6e6" stroke="#c4c4c4" stroke-width="0.7"/>
<path d="M38.81 505.76 L38.81 506.84 L37.89 507.15 L37.56 507.95 L37.99 508.83 L37.23 509.59 L36.36 509.15 L35.55 509.49 L35.24 510.41 L34.16 510.41 L33.85 509.49 L33.05 509.16 L32.17 509.59 L31.41 508.83 L31.85 507.96 L31.51 507.15 L30.59 506.84 L30.59 505.76 L31.51 505.45 L31.84 504.65 L31.41 503.77 L32.17 503.01 L33.04 503.45 L33.85 503.11 L34.16 502.19 L35.24 502.19 L35.55 503.11 L36.35 503.44 L37.23 503.01 L37.99 503.77 L37.55 504.64 L37.89 505.45 Z" fill="#f4f4f4" stroke="#f4f4f4" stroke-width="0.5" stroke-linejoin="round"/>
<circle cx="34.7" cy="506.3" r="1.45" fill="#e6e6e6" stroke="#c4c4c4" stroke-width="0.7"/>
<path d="M61.20 504.55 A3.05 3.05 0 1 1 61.20 508.05" fill="none" stroke="#1a1a1a" stroke-width="1.3"/>
<path d="M59.4 502.8 L63.199999999999996 503.5 L60.199999999999996 506.5 Z" fill="#1a1a1a"/>
<text x="71" y="509.4" font-size="9.2" class="" fill="#222" textLength="20.8" lengthAdjust="spacingAndGlyphs">Start</text>
<text x="137.4" y="509.2" font-size="9.2" class="" fill="#222" textLength="3.4" lengthAdjust="spacingAndGlyphs">-</text>
<path d="M37.4 526.4 C36 525.6 33.8 525.2 31.6 525 L29.6 521 L27.6 521 L28.6 525 L26.4 525 L25.2 523.5 L24 523.5 L24.5 525.4 L24 526.4 L24.5 527.4 L24 529.3 L25.2 529.3 L26.4 527.8 L28.6 527.8 L27.6 531.8 L29.6 531.8 L31.6 527.8 C33.8 527.6 36 527.2 37.4 526.4 Z" fill="#0a0a0a"/>
<text x="31" y="546.4" font-size="11.2" class="m" fill="#222" >7500</text>
<circle cx="82.3" cy="526.3" r="4.45" fill="#fff" stroke="#ee1c24" stroke-width="1.6"/>
<path d="M79.1 523.1 L85.5 529.5" stroke="#ee1c24" stroke-width="1.6"/>
<path d="M89.7 521 h1 v1.7 h4.6 q1.3 0 1.3 1.3 v3.9 q0 0.9 -0.5 1.5 v2 h-6.6 v-2 q-0.5 -0.6 -0.5 -1.5 v-3.9 q0 -1.1 0.7 -1.3 Z" fill="#0a0a0a"/>
<path d="M90.9 525.1 h3.7 M90.9 526.8 h3.7" stroke="#fff" stroke-width="0.9"/>
<text x="87.2" y="547.2" font-size="11.2" class="m" fill="#222" >7600</text>
<path d="M143.2 523.9 V533.7 M138.9 526.4 L147.5 531.2 M147.5 526.4 L138.9 531.2" stroke="#ff1c1c" stroke-width="1.7" fill="none"/>
<text x="143" y="545.2" font-size="11.2" class="m" fill="#222" >7700</text>
</g>
<line x1="2.0" y1="381.60" x2="170.8" y2="381.60" class="dash"/>
<text x="43.5" y="376.00" class="title" textLength="86.2" lengthAdjust="spacing">VFR Lost Comms</text>
<rect x="2.0" y="366.3" width="168.8" height="178.5" rx="0.7" fill="none" stroke="#c2c2c2" stroke-width="1.25"/>
</g>
<g>
<rect x="173.6" y="366.3" width="168.8" height="178.5" rx="0.7" fill="#fff" stroke="none"/>
<clipPath id="c10"><rect x="173.6" y="366.3" width="168.8" height="178.5"/></clipPath>
<g clip-path="url(#c10)">
<text x="181" y="392.80" font-size="9.1" class="" fill="#222" textLength="17.6" lengthAdjust="spacing">Vne</text>
<text x="317.1" y="392.95" font-size="9.3" class="b m" fill="#111" >163</text>
<rect x="173.6" y="397.15" width="168.8" height="14.6" fill="#b5c5e6" />
<text x="181" y="407.80" font-size="9.1" class="" fill="#222" textLength="17.8" lengthAdjust="spacing">Vno</text>
<text x="317.1" y="407.95" font-size="9.3" class="b m" fill="#111" >129</text>
<text x="181" y="422.80" font-size="9.1" class="" fill="#222" textLength="55" lengthAdjust="spacing">Va @ 2,550</text>
<text x="317.1" y="422.95" font-size="9.3" class="b m" fill="#111" >105</text>
<rect x="173.6" y="427.15" width="168.8" height="14.6" fill="#b5c5e6" />
<text x="181" y="437.80" font-size="9.1" class="" fill="#222" textLength="55" lengthAdjust="spacing">Va @ 2,200</text>
<text x="317.1" y="437.95" font-size="9.3" class="b m" fill="#111" >98</text>
<text x="181" y="452.80" font-size="9.1" class="" fill="#222" textLength="55" lengthAdjust="spacing">Va @ 1,900</text>
<text x="317.1" y="452.95" font-size="9.3" class="b m" fill="#111" >90</text>
<rect x="173.6" y="457.15" width="168.8" height="14.6" fill="#b5c5e6" />
<text x="181" y="467.80" font-size="9.1" class="" fill="#222" textLength="11.2" lengthAdjust="spacing">Vy</text>
<text x="317.1" y="467.95" font-size="9.3" class="b m" fill="#111" >74</text>
<text x="181" y="482.80" font-size="9.1" class="" fill="#222" textLength="11.8" lengthAdjust="spacing">Vg</text>
<text x="317.1" y="482.95" font-size="9.3" class="b m" fill="#111" >68</text>
<rect x="173.6" y="487.15" width="168.8" height="14.6" fill="#b5c5e6" />
<text x="181" y="497.80" font-size="9.1" class="" fill="#222" textLength="11.2" lengthAdjust="spacing">Vx</text>
<text x="317.1" y="497.95" font-size="9.3" class="b m" fill="#111" >62</text>
<text x="181" y="512.80" font-size="9.1" class="" fill="#222" textLength="16.6" lengthAdjust="spacing">Vs1</text>
<text x="317.1" y="512.95" font-size="9.3" class="b m" fill="#111" >48</text>
<rect x="173.6" y="517.15" width="168.8" height="14.6" fill="#b5c5e6" />
<text x="181" y="527.80" font-size="9.1" class="" fill="#222" textLength="16.6" lengthAdjust="spacing">Vs0</text>
<text x="317.1" y="527.95" font-size="9.3" class="b m" fill="#111" >40</text>
<line x1="291.5" y1="381.6" x2="291.5" y2="532" class="" stroke="#d4d6de" stroke-width="0.9"/>
</g>
<line x1="173.6" y1="381.60" x2="342.4" y2="381.60" class="dash"/>
<text x="235.3" y="376.00" class="title" textLength="45.3" lengthAdjust="spacing">Checklist</text>
<rect x="173.6" y="366.3" width="168.8" height="178.5" rx="0.7" fill="none" stroke="#c2c2c2" stroke-width="1.25"/>
</g>
<g>
<rect x="377.4" y="366.3" width="168.8" height="178.5" rx="0.7" fill="#fff" stroke="none"/>
<clipPath id="c11"><rect x="377.4" y="366.3" width="168.8" height="178.5"/></clipPath>
<g clip-path="url(#c11)">
<rect x="400.60" y="381.5" width="119.40" height="36.20" fill="#0f88ff" />
<text x="442.60" y="403.4" font-size="10.4" class="mono" fill="#fff" textLength="36.2" lengthAdjust="spacing" stroke="#fff" stroke-width="0.15">100nm</text>
<rect x="377.4" y="417.6" width="168.8" height="59.30" fill="#05a6f9" />
<text x="443.00" y="450.8" font-size="10.4" class="mono" fill="#111" textLength="36.2" lengthAdjust="spacing" stroke="#111" stroke-width="0.35">130nm</text>
<rect x="400.40" y="476.9" width="119.40" height="12.50" fill="#1590ff" />
<text x="443.00" y="487" font-size="10.4" class="mono" fill="#fff" textLength="36.2" lengthAdjust="spacing" stroke="#fff" stroke-width="0.15">100nm</text>
<rect x="436.80" y="489.3" width="47.40" height="36.00" fill="#0a4cf6" />
<text x="446.60" y="510.6" font-size="10.4" class="mono" fill="#fff" textLength="28.6" lengthAdjust="spacing" stroke="#fff" stroke-width="0.15">40nm</text>
<text x="521.40" y="386.3" font-size="6.9" class="lb b" fill="#111" textLength="23.8" lengthAdjust="spacingAndGlyphs">60,000</text>
<text x="521.40" y="417.2" font-size="6.9" class="lb b" fill="#111" textLength="23.8" lengthAdjust="spacingAndGlyphs">45,000</text>
<text x="521.50" y="475.5" font-size="6.9" class="lb b" fill="#111" textLength="23.8" lengthAdjust="spacingAndGlyphs">18,000</text>
<text x="521.50" y="488.7" font-size="6.9" class="lb b" fill="#111" textLength="23.8" lengthAdjust="spacingAndGlyphs">14,500</text>
<text x="486.00" y="523.8" font-size="6.9" class="lb b" fill="#111" textLength="24.8" lengthAdjust="spacingAndGlyphs">1,000ft</text>
<rect x="387.50" y="525.3" width="148.4" height="18.3" rx="2" fill="#fff"/>
<rect x="440.20" y="525.3" width="27.60" height="18.3" fill="#b9c6e6" />
<text x="401.25" y="538.6" font-size="10.6" class="m" fill="#222" textLength="15.8" lengthAdjust="spacingAndGlyphs">(T)</text>
<text x="427.60" y="538.6" font-size="10.6" class="m" fill="#222" textLength="15.4" lengthAdjust="spacingAndGlyphs">(L)</text>
<text x="454.30" y="538.6" font-size="10.6" class="m" fill="#222" textLength="17.8" lengthAdjust="spacingAndGlyphs">(H)</text>
<text x="484.70" y="538.6" font-size="10.6" class="m" fill="#222" textLength="22" lengthAdjust="spacingAndGlyphs">(VL)</text>
<text x="518.75" y="538.6" font-size="10.6" class="m" fill="#222" textLength="24.7" lengthAdjust="spacingAndGlyphs">(VH)</text>
<rect x="387.50" y="525.3" width="148.4" height="18.3" rx="2" fill="none" stroke="#cfcfcf" stroke-width="0.9"/>
</g>
<line x1="377.4" y1="381.60" x2="546.2" y2="381.60" class="dash"/>
<text x="406.8" y="376.00" class="title" textLength="110" lengthAdjust="spacing">VOR Service Volumes</text>
<rect x="377.4" y="366.3" width="168.8" height="178.5" rx="0.7" fill="none" stroke="#c2c2c2" stroke-width="1.25"/>
</g>
<g>
<rect x="548.3" y="366.3" width="168.8" height="178.5" rx="0.7" fill="#fff" stroke="none"/>
<clipPath id="c12"><rect x="548.3" y="366.3" width="168.8" height="178.5"/></clipPath>
<g clip-path="url(#c12)">
<rect x="572.00" y="381.5" width="119.40" height="36.20" fill="#0f88ff" />
<text x="614.00" y="403.4" font-size="10.4" class="mono" fill="#fff" textLength="36.2" lengthAdjust="spacing" stroke="#fff" stroke-width="0.15">100nm</text>
<rect x="548.3" y="417.6" width="168.8" height="59.30" fill="#05a6f9" />
<text x="614.40" y="450.8" font-size="10.4" class="mono" fill="#111" textLength="36.2" lengthAdjust="spacing" stroke="#111" stroke-width="0.35">130nm</text>
<rect x="572.00" y="476.9" width="119.50" height="12.50" fill="#1590ff" />
<text x="614.40" y="487" font-size="10.4" class="mono" fill="#fff" textLength="36.2" lengthAdjust="spacing" stroke="#fff" stroke-width="0.15">100nm</text>
<rect x="584.80" y="489.3" width="95.00" height="23.40" fill="#146eff" />
<text x="619.00" y="504.7" font-size="10.4" class="mono" fill="#fff" textLength="28.6" lengthAdjust="spacing" stroke="#fff" stroke-width="0.15">70nm</text>
<rect x="608.40" y="512.6" width="47.20" height="12.70" fill="#0a4cf6" />
<text x="618.40" y="521.9" font-size="10.4" class="mono" fill="#fff" textLength="28.6" lengthAdjust="spacing" stroke="#fff" stroke-width="0.15">40nm</text>
<text x="692.80" y="386.3" font-size="6.9" class="lb b" fill="#111" textLength="23.8" lengthAdjust="spacingAndGlyphs">60,000</text>
<text x="692.80" y="417.2" font-size="6.9" class="lb b" fill="#111" textLength="23.8" lengthAdjust="spacingAndGlyphs">45,000</text>
<text x="692.90" y="475.5" font-size="6.9" class="lb b" fill="#111" textLength="23.8" lengthAdjust="spacingAndGlyphs">18,000</text>
<text x="692.90" y="488.7" font-size="6.9" class="lb b" fill="#111" textLength="23.8" lengthAdjust="spacingAndGlyphs">14,500</text>
<text x="682.30" y="512.6" font-size="6.9" class="lb b" fill="#111" textLength="24.6" lengthAdjust="spacingAndGlyphs">5,000ft</text>
<text x="657.60" y="523.8" font-size="6.9" class="lb b" fill="#111" textLength="24.7" lengthAdjust="spacingAndGlyphs">1,000ft</text>
<rect x="558.90" y="525.3" width="148.4" height="18.3" rx="2" fill="#fff"/>
<rect x="672.40" y="525.3" width="34.90" height="18.3" fill="#b9c6e6" />
<text x="572.65" y="538.6" font-size="10.6" class="m" fill="#222" textLength="15.8" lengthAdjust="spacingAndGlyphs">(T)</text>
<text x="599.00" y="538.6" font-size="10.6" class="m" fill="#222" textLength="15.4" lengthAdjust="spacingAndGlyphs">(L)</text>
<text x="625.70" y="538.6" font-size="10.6" class="m" fill="#222" textLength="17.8" lengthAdjust="spacingAndGlyphs">(H)</text>
<text x="656.10" y="538.6" font-size="10.6" class="m" fill="#222" textLength="22" lengthAdjust="spacingAndGlyphs">(VL)</text>
<text x="690.15" y="538.6" font-size="10.6" class="m" fill="#222" textLength="24.7" lengthAdjust="spacingAndGlyphs">(VH)</text>
<rect x="558.90" y="525.3" width="148.4" height="18.3" rx="2" fill="none" stroke="#cfcfcf" stroke-width="0.9"/>
</g>
<line x1="548.3" y1="381.60" x2="717.0999999999999" y2="381.60" class="dash"/>
<text x="577.8" y="376.00" class="title" textLength="110" lengthAdjust="spacing">VOR Service Volumes</text>
<rect x="548.3" y="366.3" width="168.8" height="178.5" rx="0.7" fill="none" stroke="#c2c2c2" stroke-width="1.25"/>
</g>
</g>
</svg>
</body></html>
